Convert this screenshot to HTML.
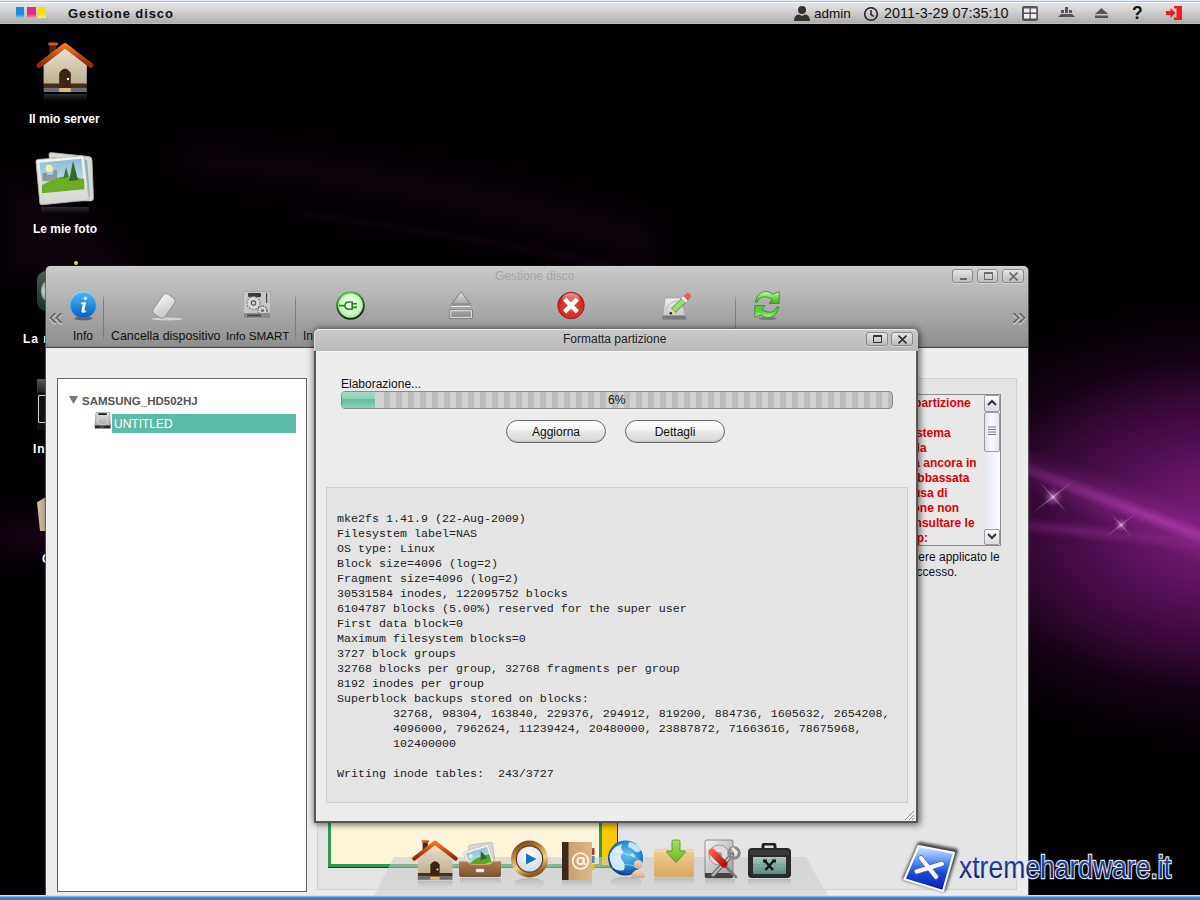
<!DOCTYPE html>
<html><head><meta charset="utf-8">
<style>
*{box-sizing:border-box;margin:0;padding:0}
html,body{width:1200px;height:900px;overflow:hidden;background:#000;font-family:"Liberation Sans",sans-serif}
.a{position:absolute}
.t{white-space:pre;position:absolute;line-height:1}
#desk{left:0;top:0;width:1200px;height:900px;background:#020002;overflow:hidden}
#topbar{left:0;top:0;width:1200px;height:24px;background:linear-gradient(#e2ecf8 0,#e2ecf8 1px,#b8bdc8 1px,#b8bdc8 2px,#f6f8fa 2px,#f6f8fa 3px,#e2e2e2 3px,#d8d8d8 9px,#b6b6b6 20px,#aeaeae 22.5px,#bcbcbc 23px,#bcbcbc 24px)}
.lbl{color:#fff;font-weight:bold;font-size:12px}
.tb{font-size:12px;color:#111}
.sep{width:1px;background:linear-gradient(rgba(120,120,120,0),#808080 15%,#7a7a7a 85%,rgba(120,120,120,0.2))}
.wb{background:linear-gradient(#e6e6e6,#bdbdbd);border:1px solid #8a8a8a;border-radius:3px;box-shadow:0 1px 0 rgba(255,255,255,.35)}
.log{font-family:"Liberation Mono",monospace;font-size:11.67px;line-height:15px;color:#222;white-space:pre}
.red{color:#e00000;font-weight:bold;font-size:12px}
.btn{border:1px solid #666;border-radius:12px;background:linear-gradient(#fdfdfd,#f4f4f4 40%,#e2e2e2 60%,#d8d8d8);box-shadow:inset 0 -1px 1px rgba(0,0,0,.12),inset 0 1px 0 #fff;font-size:12px;color:#111;text-align:center;line-height:22.5px}
</style></head><body>
<div id="desk" class="a">
  <!-- purple glow right -->
  <div class="a" style="left:860px;top:220px;width:440px;height:580px;background:radial-gradient(ellipse 360px 225px at 370px 305px,rgba(128,30,128,1) 0%,rgba(110,22,110,.9) 25%,rgba(84,14,84,.75) 50%,rgba(44,5,44,.42) 75%,rgba(0,0,0,0) 100%)"></div>
  <div class="a" style="left:940px;top:460px;width:360px;height:90px;background:radial-gradient(ellipse 250px 26px at 220px 45px,rgba(170,50,170,.35),rgba(0,0,0,0));transform:rotate(21deg)"></div>
  <div class="a" style="left:940px;top:460px;width:360px;height:90px;background:radial-gradient(ellipse 230px 9px at 220px 45px,rgba(210,80,210,.42),rgba(0,0,0,0));transform:rotate(21deg)"></div>
  <div class="a" style="left:940px;top:502px;width:300px;height:60px;background:radial-gradient(ellipse 190px 9px at 150px 30px,rgba(160,50,160,.35),rgba(0,0,0,0));transform:rotate(6deg)"></div>
  <svg class="a" style="left:1013px;top:457px" width="80" height="80" viewBox="0 0 80 80"><defs><radialGradient id="spk"><stop offset="0" stop-color="#f8d0f8" stop-opacity=".8"/><stop offset=".3" stop-color="#e090e0" stop-opacity=".4"/><stop offset="1" stop-color="#c060c0" stop-opacity="0"/></radialGradient><linearGradient id="spl" x1="0" y1="0" x2="1" y2="0"><stop offset="0" stop-color="#e0a0e0" stop-opacity="0"/><stop offset=".5" stop-color="#f0c0f0" stop-opacity=".6"/><stop offset="1" stop-color="#e0a0e0" stop-opacity="0"/></linearGradient></defs>
    <circle cx="40" cy="40" r="10" fill="url(#spk)"/>
    <rect x="14" y="39.4" width="52" height="1.2" fill="url(#spl)" transform="rotate(-38 40 40)"/>
    <rect x="18" y="39.4" width="44" height="1.2" fill="url(#spl)" transform="rotate(48 40 40)"/>
  </svg>
  <svg class="a" style="left:1096px;top:500px" width="50" height="50" viewBox="0 0 50 50">
    <circle cx="25" cy="25" r="7" fill="url(#spk)"/>
    <rect x="6" y="24.5" width="38" height="1" fill="url(#spl)" transform="rotate(-38 25 25)"/>
    <rect x="9" y="24.5" width="32" height="1" fill="url(#spl)" transform="rotate(48 25 25)"/>
  </svg>
  <!-- faint left streak -->
  <svg class="a" style="left:0;top:80px" width="800" height="200" viewBox="0 0 800 200"><defs><filter id="fb" x="-30%" y="-80%" width="160%" height="260%"><feGaussianBlur stdDeviation="12"/></filter><filter id="fb2" x="-20%" y="-80%" width="140%" height="260%"><feGaussianBlur stdDeviation="3"/></filter></defs>
  <g opacity=".04"><path d="M180 95 Q380 115 660 190 L660 140 Q420 70 180 60 Z" fill="#ff40f0" filter="url(#fb)"/>
  <path d="M0 90 Q90 130 150 200 L0 200 Z" fill="#ff40f0" filter="url(#fb)"/></g>
  <g opacity=".11"><path d="M300 134 Q450 152 610 186" fill="none" stroke="#ff40f0" stroke-width="3" filter="url(#fb2)"/></g>
</svg>
  <div class="a" style="left:-60px;top:475px;width:200px;height:120px;background:radial-gradient(ellipse 100px 38px at 100px 60px,rgba(35,4,32,.6),rgba(0,0,0,0))"></div>
</div>

<!-- desktop icons -->
<svg class="a" style="left:30px;top:36px" width="70" height="70" viewBox="0 0 70 70">
  <defs>
    <linearGradient id="hroof" x1="0" y1="0" x2="0" y2="1"><stop offset="0" stop-color="#f07828"/><stop offset=".5" stop-color="#c84a14"/><stop offset="1" stop-color="#8a2a0a"/></linearGradient>
    <linearGradient id="hwall" x1="0" y1="0" x2="0" y2="1"><stop offset="0" stop-color="#ece2cc"/><stop offset="1" stop-color="#bcae92"/></linearGradient>
    <linearGradient id="hrefl" x1="0" y1="0" x2="0" y2="1"><stop offset="0" stop-color="#3a3a3a" stop-opacity=".8"/><stop offset="1" stop-color="#222" stop-opacity="0"/></linearGradient>
  </defs>
  <rect x="19.5" y="9" width="6.5" height="12" fill="#4a2a1a"/>
  <rect x="18.3" y="6.5" width="9.5" height="3" rx="1" fill="#d85a1a"/>
  <path d="M13.6 29 L35 12 L56.8 29 L56.8 48.2 L13.6 48.2 Z" fill="url(#hwall)"/>
  <rect x="13.6" y="47.5" width="43.2" height="4.5" fill="#4a2e1c"/>
  <rect x="13.6" y="52" width="43.2" height="4" fill="#6a6e78"/>
  <path d="M29.2 52 L29.2 37 Q35 28.5 40.8 37 L40.8 52 Z" fill="#3e2418"/>
  <circle cx="38" cy="43" r="1.2" fill="#eee"/>
  <rect x="29.2" y="52" width="11.6" height="4" fill="#d8bc80"/>
  <path d="M9 29.5 L35 9.5 L61 29.5" fill="none" stroke="url(#hroof)" stroke-width="5" stroke-linecap="round" stroke-linejoin="round"/>
  <rect x="13.6" y="58" width="43.2" height="8" fill="url(#hrefl)"/>
</svg>
<div class="t lbl" style="left:29px;top:113px">Il mio server</div>

<svg class="a" style="left:32px;top:148px" width="64" height="68" viewBox="0 0 64 68">
  <defs>
    <linearGradient id="psky" x1="0" y1="0" x2="0" y2="1"><stop offset="0" stop-color="#88bcd4"/><stop offset="1" stop-color="#dcecf0"/></linearGradient>
    <linearGradient id="pfr" x1="0" y1="0" x2="0" y2="1"><stop offset="0" stop-color="#f4f4f2"/><stop offset="1" stop-color="#d4d4d0"/></linearGradient>
    <linearGradient id="prefl" x1="0" y1="0" x2="0" y2="1"><stop offset="0" stop-color="#3a3a3a" stop-opacity=".8"/><stop offset="1" stop-color="#222" stop-opacity="0"/></linearGradient>
  </defs>
  <path d="M17 6.5 Q17 4.5 19 4.6 L57 8.5 Q60 9 60 12 L61.5 50 Q61.5 53 58.5 53 L22 52 Z" fill="#d8d8d4" stroke="#b0b0aa" stroke-width=".8"/>
  <path d="M20 9 L55 12 L58 48 L24 48 Z" fill="#8ab0c0"/>
  <path d="M4 13.5 Q3.8 11.6 6 11.4 L50 8 Q52 7.8 52.3 10 L56.8 50 Q57 52 55 52.2 L10 56.8 Q8 57 7.8 55 Z" fill="url(#pfr)" stroke="#b8b8b2" stroke-width=".8"/>
  <path d="M7.6 14.8 L49.2 10.8 L52.4 41.2 L10 45.2 Z" fill="url(#psky)"/>
  <circle cx="17.2" cy="20.4" r="3.6" fill="#f4eeb0"/>
  <path d="M10.5 33 L10.5 25 L15 24.5 L15 27 L21 26.5 L22 22 L25 22 L25.5 33 Z" fill="#8a98a0"/>
  <path d="M10 37 Q20 31 30 30 Q42 28 52 31 L52.4 41.2 L10 45.2 Z" fill="#6cac28"/>
  <path d="M24 31 Q30 27 36 30 Z" fill="#5a9a22"/>
  <path d="M41 13 L46 32 L37 33 Z" fill="#2f6a28"/>
  <path d="M34 19 L37 29 L31.5 30 Z" fill="#3a7a30"/>
  <rect x="9" y="59" width="48" height="7" fill="url(#prefl)"/>
</svg>
<div class="t lbl" style="left:33px;top:223px">Le mie foto</div>

<!-- partially hidden icons -->
<div class="a" style="left:37px;top:271px;width:30px;height:40px;border-radius:9px;background:linear-gradient(#4a5e4e,#2a4434 60%,#163024)"></div>
<div class="a" style="left:41px;top:280px;width:16px;height:22px;border-radius:50%;background:radial-gradient(circle at 40% 50%,#dde4e0,#8a9a90 70%,#3a4a40)"></div>
<div class="a" style="left:74px;top:261px;width:4px;height:4px;border-radius:2px;background:#d8d840"></div>
<div class="t lbl" style="left:23px;top:333px;letter-spacing:1px">La m</div>
<div class="a" style="left:37px;top:379px;width:12px;height:13px;background:linear-gradient(#555,#222)"></div>
<div class="a" style="left:37px;top:392px;width:12px;height:38px;background:#111"></div>
<div class="a" style="left:38px;top:395px;width:10px;height:28px;border:1.5px solid #d0d0d0;border-right:0;border-radius:2px 0 0 2px"></div>
<div class="t lbl" style="left:33px;top:443px;letter-spacing:1px">In</div>
<div class="a" style="left:37px;top:495px;width:12px;height:36px;background:linear-gradient(90deg,#d8c4aa,#a08a72);clip-path:polygon(0 20%,100% 0,100% 100%,25% 100%)"></div>
<div class="t lbl" style="left:42px;top:553px">C</div>

<div id="topbar" class="a">
  <div class="a" style="left:16px;top:7px;width:8px;height:11px;background:linear-gradient(#1a8fd6 65%,#8cc8ee)"></div>
  <div class="a" style="left:27px;top:7px;width:8.5px;height:11px;background:linear-gradient(#e0307a 65%,#f0a0c0)"></div>
  <div class="a" style="left:37.5px;top:7px;width:8.5px;height:11px;background:linear-gradient(#f6e000 65%,#f8f0a0)"></div>
  <div class="t" style="left:68px;top:6.5px;font-size:13px;font-weight:bold;letter-spacing:0.9px;color:#111">Gestione disco</div>
  <svg class="a" style="left:793px;top:5px" width="18" height="16" viewBox="0 0 18 16"><circle cx="9" cy="5" r="4" fill="#333"/><path d="M1 16 Q1 10 6 9.5 L9 11 L12 9.5 Q17 10 17 16 Z" fill="#333"/></svg>
  <div class="t" style="left:814px;top:7px;font-size:13.5px;color:#111">admin</div>
  <svg class="a" style="left:863px;top:6px" width="16" height="16" viewBox="0 0 16 16"><circle cx="8" cy="8" r="6.3" fill="none" stroke="#222" stroke-width="1.6"/><path d="M8 4 L8 8.5 L11 10.5" fill="none" stroke="#222" stroke-width="1.5"/></svg>
  <div class="t" style="left:884px;top:6px;font-size:14.4px;color:#111">2011-3-29 07:35:10</div>
  <svg class="a" style="left:1022px;top:6px" width="16" height="15" viewBox="0 0 16 15"><rect x="0" y="0" width="16" height="15" rx="2" fill="#555"/><rect x="2" y="2.5" width="5.5" height="4" fill="#eee"/><rect x="8.8" y="2.5" width="5.5" height="4" fill="#eee"/><rect x="2" y="8" width="5.5" height="4.5" fill="#eee"/><rect x="8.8" y="8" width="5.5" height="4.5" fill="#eee"/></svg>
  <svg class="a" style="left:1058px;top:7px" width="17" height="11" viewBox="0 0 17 11"><rect x="7" y="0" width="3" height="3" fill="#555"/><rect x="3" y="3" width="3" height="3" fill="#555"/><rect x="7" y="3" width="3" height="3" fill="#555"/><rect x="11" y="3" width="3" height="3" fill="#555"/><path d="M0 10 L3 7 L14 7 L17 10 Z" fill="#555"/></svg>
  <svg class="a" style="left:1095px;top:8px" width="13" height="10" viewBox="0 0 13 10"><path d="M6.5 0 L13 6 L0 6 Z" fill="#555"/><rect x="0" y="7.5" width="13" height="2.5" fill="#555"/></svg>
  <div class="t" style="left:1132px;top:5px;font-size:17.5px;font-weight:bold;color:#111">?</div>
  <svg class="a" style="left:1166px;top:6px" width="16" height="14" viewBox="0 0 16 14"><path d="M8 0 L16 0 L16 14 L8 14 L8 11.5 L13 11.5 L13 2.5 L8 2.5 Z" fill="#e82020"/><rect x="10.5" y="1" width="4.5" height="12" fill="#e82020"/><path d="M0 5 L4.5 5 L4.5 2 L9.5 7 L4.5 12 L4.5 9 L0 9 Z" fill="#e82020"/></svg>
</div>
<div class="a" style="left:0;top:24px;width:1200px;height:1px;background:#000"></div>

<!-- main window -->
<div id="win" class="a" style="left:46px;top:266px;width:982px;height:634px;background:#ececec;border-radius:5px 5px 0 0;box-shadow:-1px 0 1px rgba(90,90,90,.9),1px 0 1px rgba(90,90,90,.9)">
  <div class="a" style="left:0;top:0;width:982px;height:82px;background:linear-gradient(#cfcfcf 0,#c4c4c4 10%,#b2b2b2 40%,#9a9a9a 80%,#8e8e8e 98%,#4a4a4a 98.8%);border-radius:5px 5px 0 0"></div>
  <div class="t" style="left:449px;top:4px;font-size:12px;color:#a4a4a4">Gestione disco</div>
  <div class="a wb" style="left:906px;top:3px;width:21px;height:14px"><div class="a" style="left:7px;top:8px;width:7px;height:2px;background:#6a6a6a"></div></div>
  <div class="a wb" style="left:931px;top:3px;width:21px;height:14px"><div class="a" style="left:6px;top:2px;width:9px;height:8px;border:1px solid #6a6a6a;border-top-width:2px"></div></div>
  <div class="a wb" style="left:956px;top:3px;width:22px;height:14px"><svg class="a" style="left:6px;top:2px" width="9" height="9" viewBox="0 0 9 9"><path d="M0.5 0.5 L8.5 8.5 M8.5 0.5 L0.5 8.5" stroke="#6a6a6a" stroke-width="1.6"/></svg></div>
  <!-- toolbar -->
  <svg class="a" style="left:3px;top:47px" width="14" height="12" viewBox="0 0 14 12"><path d="M6.5 1 L1.5 6 L6.5 11 M12.5 1 L7.5 6 L12.5 11" fill="none" stroke="#f0f0f0" stroke-width="2"/><path d="M6.5 0 L1.5 5 L6.5 10 M12.5 0 L7.5 5 L12.5 10" fill="none" stroke="#666" stroke-width="1.9"/></svg>
  <svg class="a" style="left:966px;top:47px" width="14" height="12" viewBox="0 0 14 12"><path d="M1.5 1 L6.5 6 L1.5 11 M7.5 1 L12.5 6 L7.5 11" fill="none" stroke="#f0f0f0" stroke-width="2"/><path d="M1.5 0 L6.5 5 L1.5 10 M7.5 0 L12.5 5 L7.5 10" fill="none" stroke="#666" stroke-width="1.9"/></svg>

  <!-- info icon -->
  <svg class="a" style="left:22px;top:24px" width="32" height="32" viewBox="0 0 32 32">
    <defs><linearGradient id="gi" x1="0" y1="0" x2="0" y2="1"><stop offset="0" stop-color="#58b4ee"/><stop offset=".5" stop-color="#2a8ee0"/><stop offset="1" stop-color="#0a5cc0"/></linearGradient>
    <linearGradient id="gi2" x1="0" y1="0" x2="0" y2="1"><stop offset="0" stop-color="#9ae4ff"/><stop offset="1" stop-color="#3aa0e8" stop-opacity=".3"/></linearGradient></defs>
    <ellipse cx="15.5" cy="28.5" rx="9" ry="1.8" fill="#333" opacity=".6"/>
    <circle cx="15.3" cy="14.9" r="13.1" fill="url(#gi)" stroke="url(#gi2)" stroke-width="1"/>
    <circle cx="17.3" cy="8.4" r="1.7" fill="#fff"/>
    <path d="M13.3 12.6 L18.2 12.2 L16.4 19.6 Q16.1 21 17.9 20.4 L17.5 22.2 Q12.8 23.8 13.6 20 L14.9 14.3 L13.1 14.3 Z" fill="#fff"/>
  </svg>
  <div class="t tb" style="left:27px;top:64px">Info</div>
  <div class="a sep" style="left:57px;top:28px;height:48px"></div>

  <!-- eraser -->
  <svg class="a" style="left:101px;top:24px" width="40" height="32" viewBox="0 0 40 32">
    <defs><linearGradient id="ge" x1="0" y1="0" x2="1" y2="1"><stop offset="0" stop-color="#f4f4f4"/><stop offset="1" stop-color="#c4c4c4"/></linearGradient></defs>
    <ellipse cx="20" cy="29" rx="16" ry="1.5" fill="#ddd" opacity=".8"/>
    <rect x="10" y="4" width="14" height="24" rx="4" transform="rotate(35 17 16)" fill="url(#ge)" stroke="#8a8a8a" stroke-width=".8"/>
  </svg>
  <div class="t tb" style="left:65px;top:64px;font-size:12.4px">Cancella dispositivo</div>

  <!-- smart hdd -->
  <svg class="a" style="left:197px;top:25px" width="28" height="28" viewBox="0 0 28 28">
    <rect x="0.5" y="0.5" width="27" height="27" rx="1.5" fill="#c6c6c6" stroke="#a8a8a8" stroke-width="1"/>
    <rect x="5" y="2" width="13" height="4" rx="1" fill="#3a3a3a"/>
    <circle cx="10.5" cy="12" r="6.5" fill="#d8d8d8" stroke="#7a7a7a" stroke-width="1.2" stroke-dasharray="2 1.2"/>
    <circle cx="10.5" cy="12" r="2.2" fill="none" stroke="#555" stroke-width="1.2"/>
    <circle cx="19.5" cy="19.5" r="4.5" fill="#d0d0d0" stroke="#6a6a6a" stroke-width="1.4" stroke-dasharray="1.6 1"/>
    <circle cx="19.5" cy="19.5" r="1.5" fill="#666"/>
    <rect x="23" y="2" width="1.2" height="10" fill="#444"/>
    <rect x="1" y="22" width="26" height="5" fill="#8a8a8a"/>
    <rect x="4" y="23.5" width="14" height="2" fill="#4a4a4a"/>
  </svg>
  <div class="t tb" style="left:180px;top:64px;font-size:11.7px">Info SMART</div>
  <div class="a sep" style="left:249px;top:28px;height:48px"></div>
  <div class="t tb" style="left:257px;top:64px">In</div>

  <!-- plug -->
  <svg class="a" style="left:290px;top:25px" width="30" height="30" viewBox="0 0 30 30">
    <defs><radialGradient id="gp" cx=".5" cy=".4" r=".6"><stop offset="0" stop-color="#f4fff4"/><stop offset=".7" stop-color="#d0f4c8"/><stop offset="1" stop-color="#90e080"/></radialGradient>
    <linearGradient id="gpr" x1="0" y1="0" x2=".3" y2="1"><stop offset="0" stop-color="#58d048"/><stop offset=".5" stop-color="#2a7a22"/><stop offset="1" stop-color="#0a2a0a"/></linearGradient></defs>
    <circle cx="14.5" cy="14.5" r="13.3" fill="url(#gp)" stroke="url(#gpr)" stroke-width="2"/>
    <circle cx="14.5" cy="14.5" r="11.6" fill="none" stroke="#a0e890" stroke-width=".8"/>
    <path d="M3 14.6 L9 14.6 M16.2 11 L13 11 Q9 11 9 14.6 Q9 18.3 13 18.3 L16.2 18.3 Z M16.2 12.8 L21 12.8 M16.2 16.4 L21 16.4" fill="none" stroke="#1e8a18" stroke-width="1.6"/>
  </svg>

  <!-- eject -->
  <svg class="a" style="left:403px;top:25px" width="26" height="30" viewBox="0 0 26 30">
    <defs><linearGradient id="gj" x1="0" y1="0" x2="0" y2="1"><stop offset="0" stop-color="#e4e4e4"/><stop offset="1" stop-color="#a4a4a4"/></linearGradient>
    <linearGradient id="gj2" x1="0" y1="0" x2="0" y2="1"><stop offset="0" stop-color="#a8a8a8"/><stop offset="1" stop-color="#8a8a8a"/></linearGradient></defs>
    <path d="M12 0.6 L21.4 13.1 L2.6 13.1 Z" fill="url(#gj)" stroke="#747474" stroke-width=".9" stroke-linejoin="round"/>
    <rect x="1.2" y="14.6" width="21.3" height="2" fill="#f0f0f0" stroke="#858585" stroke-width=".7"/>
    <rect x="0.8" y="18.8" width="22.6" height="8.6" fill="url(#gj2)" stroke="#7a7a7a" stroke-width=".8"/>
    <rect x="1.8" y="19.8" width="20.6" height="6.6" fill="none" stroke="#e8e8e8" stroke-width=".9"/>
  </svg>

  <!-- red x -->
  <svg class="a" style="left:510px;top:25px" width="30" height="30" viewBox="0 0 30 30">
    <defs><radialGradient id="gx" cx=".5" cy=".55" r=".6"><stop offset="0" stop-color="#e85040"/><stop offset=".75" stop-color="#d02a20"/><stop offset="1" stop-color="#a01010"/></radialGradient>
    <linearGradient id="gx2" x1="0" y1="0" x2="0" y2="1"><stop offset="0" stop-color="#fff" stop-opacity=".5"/><stop offset="1" stop-color="#fff" stop-opacity="0"/></linearGradient></defs>
    <circle cx="15" cy="14.5" r="13.3" fill="url(#gx)" stroke="#9a1a14" stroke-width=".8"/>
    <ellipse cx="15" cy="8" rx="9" ry="6" fill="url(#gx2)"/>
    <path d="M10.2 9.7 L19.8 19.3 M19.8 9.7 L10.2 19.3" stroke="#fff" stroke-width="4.4" stroke-linecap="square"/>
  </svg>

  <!-- pencil hdd -->
  <svg class="a" style="left:614px;top:26px" width="32" height="30" viewBox="0 0 32 30">
    <defs><linearGradient id="ph1" x1="0" y1="0" x2="0" y2="1"><stop offset="0" stop-color="#f0f0f0"/><stop offset="1" stop-color="#c8c8c8"/></linearGradient>
    <linearGradient id="ph2" x1="0" y1="0" x2="1" y2="1"><stop offset="0" stop-color="#3a8a18"/><stop offset=".5" stop-color="#a8e080"/><stop offset="1" stop-color="#2a7010"/></linearGradient></defs>
    <path d="M5.2 6.1 L20 6 L25.7 23.7 L2.8 23.7 Z" fill="url(#ph1)" stroke="#999" stroke-width=".6"/>
    <path d="M6 18 Q8 10 18 8.5" fill="none" stroke="#aaa" stroke-width=".8"/>
    <rect x="2.8" y="23.7" width="22.9" height="4" fill="#7a7a7a"/>
    <rect x="2.8" y="27" width="22.9" height="1" fill="#888"/>
    <path d="M10.1 21.9 L11.5 16.3 L15.7 20.5 Z" fill="#f0d8a0"/>
    <circle cx="10.8" cy="21.2" r="1.3" fill="#222"/>
    <path d="M11.5 16.3 L21.4 6.4 L25.6 10.6 L15.7 20.5 Z" fill="url(#ph2)" stroke="#2a6a10" stroke-width=".5"/>
    <path d="M21.4 6.4 L23.6 4.2 L27.8 8.4 L25.6 10.6 Z" fill="#f4f4f4"/>
    <path d="M23.6 4.2 L26.4 1.4 Q28 0 29.5 1.5 L30.6 2.6 Q32 4 30.6 5.6 L27.8 8.4 Z" fill="#e06060"/>
  </svg>
  <div class="a sep" style="left:689px;top:28px;height:54px"></div>

  <!-- refresh -->
  <svg class="a" style="left:706px;top:24px" width="30" height="32" viewBox="0 0 30 32">
    <defs><linearGradient id="gr" x1="0" y1="0" x2="0" y2="1"><stop offset="0" stop-color="#c8f8a8"/><stop offset=".45" stop-color="#7ee05a"/><stop offset="1" stop-color="#38b020"/></linearGradient>
    <linearGradient id="gr2" x1="0" y1="0" x2="0" y2="1"><stop offset="0" stop-color="#b8f098"/><stop offset=".5" stop-color="#60d040"/><stop offset="1" stop-color="#58d040"/></linearGradient></defs>
    <ellipse cx="15.5" cy="28.5" rx="9" ry="1.6" fill="#333" opacity=".35"/>
    <path d="M3.2 11.8 Q5.5 2.5 13 1.5 Q17.5 1 20.8 4.2 L27.2 1.7 L27.2 13.4 L17.2 13.4 L20.2 9.6 Q16 6.2 11.5 6.8 Q7 7.5 5 12.4 Z" fill="url(#gr)" stroke="#2a8a1a" stroke-width=".8" stroke-linejoin="round"/>
    <path d="M3.2 11.8 Q5.5 2.5 13 1.5 Q17.5 1 20.8 4.2 L27.2 1.7 L27.2 13.4 L17.2 13.4 L20.2 9.6 Q16 6.2 11.5 6.8 Q7 7.5 5 12.4 Z" transform="rotate(180 15 14.5)" fill="url(#gr2)" stroke="#2a8a1a" stroke-width=".8" stroke-linejoin="round"/>
  </svg>

  <!-- content area -->
  <div class="a" style="left:11px;top:112px;width:250px;height:514px;background:#fff;border:1px solid #666"></div>
  <svg class="a" style="left:23px;top:129.5px" width="9" height="8" viewBox="0 0 9 8"><path d="M0 0 L9 0 L4.5 8 Z" fill="#777"/></svg>
  <div class="t" style="left:36px;top:130px;font-size:11.5px;font-weight:bold;color:#555">SAMSUNG_HD502HJ</div>
  <svg class="a" style="left:48px;top:146px" width="17" height="17" viewBox="0 0 17 17"><defs><linearGradient id="gd" x1="0" y1="0" x2="0" y2="1"><stop offset="0" stop-color="#e4e4e6"/><stop offset="1" stop-color="#a4a4a8"/></linearGradient></defs><path d="M2 0.5 L15.5 0.5 L16.5 14 L0.8 14 Z" fill="url(#gd)" stroke="#8a8a8e" stroke-width=".6"/><rect x="4" y="1.3" width="9" height="1.6" rx=".8" fill="#1a1a1a"/><ellipse cx="8.6" cy="9" rx="5.5" ry="4" fill="none" stroke="#d8d8dc" stroke-width="1"/><rect x="0.8" y="13.5" width="15.8" height="3" fill="#2a2a2a"/><rect x="6" y="14.3" width="4" height="1.4" fill="#555"/></svg>
  <div class="a" style="left:66px;top:148px;width:184px;height:19px;background:#5bbcaa"></div>
  <div class="t" style="left:68px;top:152px;font-size:12px;color:#fff">UNTITLED</div>

  <!-- right panel -->
  <div class="a" style="left:271px;top:112px;width:700px;height:512px;background:#e4e4e4;border:1px solid #d2d2d2"></div>
  <!-- green box -->
  <div class="a" style="left:282px;top:500px;width:289px;height:101px;background:#fdf4da;border:3px solid #2f9a4f;box-shadow:0 1px 0 #333"></div>
  <div class="a" style="left:553px;top:500px;width:19px;height:99px;background:#f8c800;border-left:3px solid #2a9a48;border-right:1px solid #333"></div>
  <!-- red text box -->
  <div class="a" style="left:560px;top:128px;width:395px;height:152px;background:#e8e8e8;border:1px solid #8c8c8c"></div>
  <div class="a" style="left:938px;top:129px;width:16px;height:150px;background:linear-gradient(90deg,#e8e8f0,#fafafe)"></div>
  <div class="a" style="left:938px;top:129px;width:16px;height:17px;background:linear-gradient(#fdfdfd,#d8dae2);border:1px solid #9a9aa8;border-radius:2px"></div>
  <svg class="a" style="left:941px;top:133px" width="10" height="7" viewBox="0 0 10 7"><path d="M1 6 L5 2 L9 6" fill="none" stroke="#333" stroke-width="2"/></svg>
  <div class="a" style="left:938px;top:146px;width:16px;height:40px;background:linear-gradient(90deg,#dfe0e8,#fbfbff 40%,#e6e7ef);border:1px solid #9a9aa8;border-radius:2px"></div>
  <svg class="a" style="left:942px;top:160px" width="8" height="10" viewBox="0 0 8 10"><path d="M0 1H8M0 3.5H8M0 6H8M0 8.5H8" stroke="#777" stroke-width="1"/></svg>
  <div class="a" style="left:938px;top:263px;width:16px;height:16px;background:linear-gradient(#fdfdfd,#d8dae2);border:1px solid #9a9aa8;border-radius:2px"></div>
  <svg class="a" style="left:941px;top:267px" width="10" height="7" viewBox="0 0 10 7"><path d="M1 1 L5 5 L9 1" fill="none" stroke="#333" stroke-width="2"/></svg>
  <div class="t red" style="left:0;width:924.8px;text-align:right;top:130px;line-height:15px">Dispositivo partizione</div>
  <div class="t red" style="left:0;width:904.6px;text-align:right;top:160px;line-height:15px">sistema</div>
  <div class="t red" style="left:0;width:880.6px;text-align:right;top:175px;line-height:15px">della</div>
  <div class="t red" style="left:0;width:930.6px;text-align:right;top:190px;line-height:15px">La ancora in</div>
  <div class="t red" style="left:0;width:923.4px;text-align:right;top:205px;line-height:15px">abbassata</div>
  <div class="t red" style="left:0;width:901.7px;text-align:right;top:220px;line-height:15px">causa di</div>
  <div class="t red" style="left:0;width:913.2px;text-align:right;top:235px;line-height:15px">zione non</div>
  <div class="t red" style="left:0;width:928.6px;text-align:right;top:250px;line-height:15px">consultare le</div>
  <div class="t red" style="left:0;width:882.0px;text-align:right;top:265px;line-height:15px">help:</div>
  <div class="t" style="left:0;width:953.7px;text-align:right;top:284px;font-size:12px;line-height:15px;color:#111">potrebbe essere applicato le</div>
  <div class="t" style="left:0;width:911.2px;text-align:right;top:299px;font-size:12px;line-height:15px;color:#111">accesso.</div>
</div>

<!-- bottom blue bar -->
<div class="a" style="left:0;top:895px;width:1200px;height:5px;background:linear-gradient(#d4e2f2 0,#d4e2f2 1px,#8ab0dc 1px,#8ab0dc 2px,#4f88c8 2px,#3f78ba)"></div>

<!-- dock -->
<svg class="a" style="left:360px;top:850px" width="480" height="46" viewBox="0 0 480 46">
  <defs><linearGradient id="gsh" x1="0" y1="0" x2="0" y2="1"><stop offset="0" stop-color="#c8c8c8" stop-opacity=".55"/><stop offset="1" stop-color="#d0d0d0" stop-opacity=".6"/></linearGradient></defs>
  <path d="M34 7 L446 7 L468 46 L14 46 Z" fill="url(#gsh)"/>
</svg>
<!-- dock icons -->
<svg width="0" height="0" style="position:absolute"><defs><linearGradient id="refl" x1="0" y1="0" x2="0" y2="1"><stop offset="0" stop-color="#808080" stop-opacity=".35"/><stop offset="1" stop-color="#909090" stop-opacity="0"/></linearGradient></defs></svg>
<svg class="a" style="left:407px;top:834.5px" width="56" height="62" viewBox="0 0 70 77.5">
  <rect x="19.5" y="9" width="6.5" height="12" fill="#4a2a1a"/>
  <rect x="18.3" y="6.5" width="9.5" height="3" rx="1" fill="#d85a1a"/>
  <path d="M13.6 29 L35 12 L56.8 29 L56.8 48.2 L13.6 48.2 Z" fill="url(#hwall)"/>
  <rect x="13.6" y="47.5" width="43.2" height="4.5" fill="#4a2e1c"/>
  <rect x="13.6" y="52" width="43.2" height="4" fill="#6a6e78"/>
  <path d="M29.2 52 L29.2 37 Q35 28.5 40.8 37 L40.8 52 Z" fill="#3e2418"/>
  <circle cx="38" cy="43" r="1.2" fill="#eee"/>
  <rect x="29.2" y="52" width="11.6" height="4" fill="#d8bc80"/>
  <path d="M9 29.5 L35 9.5 L61 29.5" fill="none" stroke="url(#hroof)" stroke-width="5" stroke-linecap="round" stroke-linejoin="round"/>
  <rect x="13.6" y="57" width="43.2" height="9" fill="url(#refl)"/>
</svg>
<svg class="a" style="left:459px;top:842px" width="46" height="54" viewBox="0 0 46 54">
  <defs>
    <linearGradient id="dd1" x1="0" y1="0" x2="0" y2="1"><stop offset="0" stop-color="#b08050"/><stop offset="1" stop-color="#7a5030"/></linearGradient>
    <linearGradient id="dd2" x1="0" y1="0" x2="0" y2="1"><stop offset="0" stop-color="#8cc4e0"/><stop offset="1" stop-color="#d0e8f0"/></linearGradient>
  </defs>
  <g transform="rotate(-18 22 16)">
    <rect x="12" y="2" width="24" height="20" rx="1.5" fill="#d8d8d4" stroke="#aaa" stroke-width=".6" transform="rotate(10 24 12)"/>
    <rect x="7" y="5" width="26" height="21" rx="1.5" fill="#f2f2ee" stroke="#bbb" stroke-width=".6"/>
    <rect x="9" y="7" width="22" height="16" fill="url(#dd2)"/>
    <circle cx="13" cy="11" r="2" fill="#f0eeb0"/>
    <path d="M9 18 Q18 13 31 15 L31 23 L9 23 Z" fill="#5aa828"/>
    <path d="M24 9 L28 18 L21 18 Z" fill="#2f6a28"/>
  </g>
  <path d="M1 19 L8 19 Q10 22 14 22 L28 22 Q32 22 34 19 L41 19 Q42 19 42 20 L42 33 Q42 35 40 35 L2 35 Q0 35 0 33 L0 20 Q0 19 1 19 Z" fill="url(#dd1)"/>
  <path d="M1 19.5 L8 19.5 Q10 22.5 14 22.5 L28 22.5 Q32 22.5 34 19.5 L41 19.5" fill="none" stroke="#d0a878" stroke-width="1"/>
  <rect x="16.5" y="26.5" width="9" height="4" rx="1.5" fill="#f4f0e8" stroke="#7a5a3a" stroke-width=".6"/>
  <rect x="1" y="36" width="41" height="7" fill="url(#refl)"/>
</svg>
<svg class="a" style="left:509px;top:838px" width="42" height="58" viewBox="0 0 42 58">
  <defs>
    <linearGradient id="dp1" x1="0" y1="0" x2=".4" y2="1"><stop offset="0" stop-color="#4a2a0a"/><stop offset=".35" stop-color="#b07830"/><stop offset=".7" stop-color="#f0d090"/><stop offset="1" stop-color="#8a5a20"/></linearGradient>
    <radialGradient id="dp2" cx=".5" cy=".35" r=".6"><stop offset="0" stop-color="#ffffff"/><stop offset="1" stop-color="#d4dce4"/></radialGradient>
  </defs>
  <circle cx="20.5" cy="21" r="18.5" fill="url(#dp1)"/>
  <circle cx="20.5" cy="21" r="13.8" fill="#5a3a14"/>
  <circle cx="20.5" cy="21" r="12.6" fill="url(#dp2)"/>
  <path d="M17 15.5 L27.5 21 L17 26.5 Z" fill="#1a70c0"/>
  <ellipse cx="20.5" cy="45" rx="15" ry="5" fill="url(#refl)"/>
</svg>
<svg class="a" style="left:560px;top:840px" width="40" height="56" viewBox="0 0 40 56">
  <defs><linearGradient id="da1" x1="0" y1="0" x2="1" y2="0"><stop offset="0" stop-color="#c49a68"/><stop offset="1" stop-color="#dcb888"/></linearGradient></defs>
  <rect x="2" y="2" width="30" height="38" rx="1" fill="url(#da1)"/>
  <rect x="2" y="2" width="6.5" height="38" fill="#3a2a1a"/>
  <rect x="32" y="8" width="2.5" height="7" rx="1" fill="#c82828"/>
  <rect x="32" y="16" width="2.5" height="7" fill="#4a88c8"/>
  <rect x="32" y="24" width="2.5" height="6" fill="#e8c020"/>
  <circle cx="20.5" cy="21" r="7.8" fill="none" stroke="#fff4e0" stroke-width="1.8"/>
  <circle cx="20.5" cy="21" r="3.2" fill="none" stroke="#fff4e0" stroke-width="1.8"/>
  <path d="M23.7 17.5 L23.7 22.5 Q23.7 24.5 26 24" fill="none" stroke="#fff4e0" stroke-width="1.8"/>
  <rect x="2" y="40" width="30" height="7" fill="url(#refl)"/>
</svg>
<svg class="a" style="left:606px;top:838px" width="44" height="58" viewBox="0 0 44 58">
  <defs>
    <radialGradient id="dg1" cx=".55" cy=".4" r=".65"><stop offset="0" stop-color="#6cc8f0"/><stop offset=".55" stop-color="#2a8ad0"/><stop offset="1" stop-color="#0a2a78"/></radialGradient>
    <linearGradient id="dg2" x1="0" y1="0" x2="0" y2="1"><stop offset="0" stop-color="#f4dcc4"/><stop offset="1" stop-color="#d0a888"/></linearGradient>
  </defs>
  <circle cx="19.5" cy="20" r="17.5" fill="url(#dg1)"/>
  <path d="M4 16 Q8 8 16 6 Q14 12 18 14 Q13 17 16 22 Q20 26 18 32 Q10 34 6 28 Q3 22 4 16 Z" fill="#e8f6ff" opacity=".9"/>
  <path d="M23 4 Q31 5 35 11 Q34 15 30 14 Q26 10 22 9 Z" fill="#e8f6ff" opacity=".8"/>
  <path d="M26 15 Q30 17 29 20 Q26 19 24 17 Z" fill="#e8f6ff" opacity=".7"/>
  <path d="M3 19 Q19 10 36 24 M6 30 Q20 22 34 31" fill="none" stroke="#a8e8ff" stroke-width=".8" opacity=".8"/>
  <circle cx="32" cy="26.5" r="4.3" fill="url(#dg2)"/>
  <path d="M25 39.5 Q25 35 28.5 33 Q29.5 31.5 32 31.5 Q34.5 31.5 35.5 33 Q39 35 39 39.5 Q32 41 25 39.5 Z" fill="url(#dg2)"/>
  <ellipse cx="20" cy="44" rx="16" ry="5" fill="url(#refl)"/>
</svg>
<svg class="a" style="left:652px;top:838px" width="44" height="58" viewBox="0 0 44 58">
  <defs>
    <linearGradient id="df1" x1="0" y1="0" x2="0" y2="1"><stop offset="0" stop-color="#f0d098"/><stop offset="1" stop-color="#d8a860"/></linearGradient>
    <linearGradient id="df2" x1="0" y1="0" x2="0" y2="1"><stop offset="0" stop-color="#a8e060"/><stop offset="1" stop-color="#6ab828"/></linearGradient>
  </defs>
  <path d="M2 14 Q2 11 5 11 L12 11 Q14 9 16 11 L39 11 Q42 11 42 14 L42 37 Q42 39.5 39.5 39.5 L4.5 39.5 Q2 39.5 2 37 Z" fill="url(#df1)"/>
  <path d="M3 13 L41 13" stroke="#fff" stroke-width=".8" opacity=".6"/>
  <path d="M20 3.5 Q20 2 21.5 2 L26.5 2 Q28 2 28 3.5 L28 13 L32.5 13 Q34 13 33 14.5 L25 23.5 Q24 24.5 23 23.5 L15 14.5 Q14 13 15.5 13 L20 13 Z" fill="url(#df2)" stroke="#4a8a18" stroke-width=".8"/>
  <rect x="2" y="40" width="40" height="7" fill="url(#refl)"/>
</svg>
<svg class="a" style="left:703px;top:838px" width="40" height="58" viewBox="0 0 40 58">
  <defs><linearGradient id="dt1" x1="0" y1="0" x2="1" y2="1"><stop offset="0" stop-color="#f4f4f4"/><stop offset="1" stop-color="#9a9a9a"/></linearGradient>
  <linearGradient id="dt2" x1="0" y1="0" x2="1" y2="1"><stop offset="0" stop-color="#ff5a4a"/><stop offset="1" stop-color="#b01010"/></linearGradient></defs>
  <rect x="2" y="2" width="28" height="38" rx="2" fill="url(#dt1)" stroke="#777" stroke-width=".8"/>
  <circle cx="16" cy="17" r="10" fill="#dcdcdc" stroke="#999" stroke-width="1"/>
  <circle cx="16" cy="17" r="3" fill="#999"/>
  <rect x="2" y="35" width="28" height="5" fill="#444"/>
  <path d="M10 37 L29 17" stroke="#6a6a6a" stroke-width="4.5" stroke-linecap="round"/>
  <path d="M10 37 L29 17" stroke="#b8b8b8" stroke-width="2" stroke-linecap="round"/>
  <circle cx="31" cy="15" r="5.2" fill="none" stroke="#8a8a8a" stroke-width="3.2"/>
  <path d="M29 10 L34 15" stroke="#e8e8e8" stroke-width="3"/>
  <path d="M21 27 L33 39" stroke="#777" stroke-width="2.5" stroke-linecap="round"/>
  <path d="M9 14 L21 26" stroke="url(#dt2)" stroke-width="7" stroke-linecap="round"/>
  <rect x="2" y="41" width="30" height="7" fill="url(#refl)"/>
</svg>
<svg class="a" style="left:746px;top:843px" width="48" height="53" viewBox="0 0 48 53">
  <defs><linearGradient id="db1" x1="0" y1="0" x2="0" y2="1"><stop offset="0" stop-color="#a8c8c0"/><stop offset="1" stop-color="#5a8a80"/></linearGradient></defs>
  <rect x="17" y="1" width="12" height="6" rx="2" fill="none" stroke="#222" stroke-width="3"/>
  <rect x="2" y="5" width="43" height="30" rx="4" fill="#2a2a2a"/>
  <rect x="4" y="7" width="39" height="5" fill="#3a3a3a"/>
  <rect x="7" y="14" width="33" height="17" fill="url(#db1)"/>
  <path d="M7 21.5 H40 M18 14 V31 M29 14 V31" stroke="#7a9a94" stroke-width=".6"/><path d="M19 18 L27 27 M27.5 18 L19.5 27" stroke="#1a1a1a" stroke-width="2.6"/><rect x="17" y="16.5" width="4" height="3" fill="#1a1a1a"/><rect x="26" y="16.5" width="4" height="3" fill="#1a1a1a"/>
  <rect x="2" y="36" width="43" height="7" fill="url(#refl)"/>
</svg>

<!-- logo -->
<svg class="a" style="left:900px;top:838px" width="280" height="58" viewBox="0 0 280 58">
  <defs>
    <linearGradient id="lg1" x1="0" y1="0" x2="0" y2="1"><stop offset="0" stop-color="#d8ecff"/><stop offset=".35" stop-color="#5a8ef0"/><stop offset=".6" stop-color="#1a4ad8"/><stop offset="1" stop-color="#0a18a8"/></linearGradient><filter id="lgb" x="-30%" y="-30%" width="160%" height="160%"><feGaussianBlur stdDeviation="1.5"/></filter>
    <linearGradient id="lg2" x1="0" y1="0" x2="0" y2="1"><stop offset="0" stop-color="#3a5aa8"/><stop offset="1" stop-color="#0a1a58"/></linearGradient>
  </defs>
  <g filter="url(#lgb)" opacity=".7"><path d="M19.6 6 L56 12.8 L44 51.5 L4.5 40.3 Z" fill="#000" stroke="#000" stroke-width="4" stroke-linejoin="round"/></g>
  <path d="M18.6 8 L54 14.8 L43 53 L4.5 41.3 Z" fill="url(#lg1)" stroke="#f4f8ff" stroke-width="2.2" stroke-linejoin="round"/>
  <path d="M21 20 L36 38.7 M16.7 33.5 L41.9 25.8" stroke="#5a6aa0" stroke-width="5.6" stroke-linecap="round"/>
  <path d="M21 20 L36 38.7 M16.7 33.5 L41.9 25.8" stroke="#fafcff" stroke-width="4.2" stroke-linecap="round"/>
  <text x="59" y="40" font-family="Liberation Sans" font-size="32" fill="url(#lg2)" stroke="#dfe6f8" stroke-width="2.4" paint-order="stroke" textLength="212" lengthAdjust="spacingAndGlyphs">xtremehardware.it</text>
</svg>
<!-- dialog -->
<div id="dlg" class="a" style="left:314px;top:329px;width:604px;height:494px;background:#ececec;border:2px solid #555;border-top:0;border-radius:5px 5px 0 0;box-shadow:0 0 6px 1px rgba(0,0,0,.4),3px 2px 6px rgba(0,0,0,.25)">
  <div class="a" style="left:0;top:22px;width:600px;height:1px;background:#f6f6f6"></div><div class="a" style="left:0;top:22px;width:1px;height:470px;background:#f2f2f2"></div>
  <div class="a" style="left:-2px;top:0;width:604px;height:22px;background:linear-gradient(#c9c9c9,#c4c4c4 40%,#b9b9b9);border-radius:5px 5px 0 0;border-top:1px solid #ececec;box-shadow:inset 1px 0 0 #dcdcdc"></div>
  <div class="t" style="left:247px;top:4px;font-size:12px;color:#222">Formatta partizione</div>
  <div class="a wb" style="left:550px;top:3px;width:22px;height:14px"><div class="a" style="left:6px;top:2px;width:9px;height:8px;border:1px solid #333;border-top-width:2px"></div></div>
  <div class="a wb" style="left:575px;top:3px;width:22px;height:14px"><svg class="a" style="left:6px;top:2px" width="9" height="9" viewBox="0 0 9 9"><path d="M0.5 0.5 L8.5 8.5 M8.5 0.5 L0.5 8.5" stroke="#333" stroke-width="1.6"/></svg></div>

  <div class="t" style="left:25px;top:49px;font-size:12px;color:#111">Elaborazione...</div>
  <div class="a" style="left:25px;top:62px;width:552px;height:18px;border:1px solid #8a8a8a;border-radius:4px;background:repeating-linear-gradient(90deg,#d2d2d2 0 6px,#bebebe 6px 12px);overflow:hidden">
    <div class="a" style="left:33px;top:0;width:3px;height:16px;background:#d2d2d2"></div>
    <div class="a" style="left:0;top:0;width:33px;height:16px;background:linear-gradient(#a6dac8,#92d2bc 40%,#6cba9e 48%,#6cbea2 60%,#88d4b8)"></div>
  </div>
  <div class="t" style="left:292px;top:65px;font-size:12px;color:#111">6%</div>
  <div class="a btn" style="left:190px;top:91px;width:100px;height:23px">Aggiorna</div>
  <div class="a btn" style="left:309px;top:91px;width:100px;height:23px">Dettagli</div>

  <div class="a" style="left:10px;top:158px;width:582px;height:316px;background:#e4e4e4;border:1px solid #d0d0d0"></div>
  <div class="a log" style="left:21px;top:183px">mke2fs 1.41.9 (22-Aug-2009)
Filesystem label=NAS
OS type: Linux
Block size=4096 (log=2)
Fragment size=4096 (log=2)
30531584 inodes, 122095752 blocks
6104787 blocks (5.00%) reserved for the super user
First data block=0
Maximum filesystem blocks=0
3727 block groups
32768 blocks per group, 32768 fragments per group
8192 inodes per group
Superblock backups stored on blocks:
        32768, 98304, 163840, 229376, 294912, 819200, 884736, 1605632, 2654208,
        4096000, 7962624, 11239424, 20480000, 23887872, 71663616, 78675968,
        102400000

Writing inode tables:  243/3727</div>
  <svg class="a" style="left:587px;top:480px" width="12" height="12" viewBox="0 0 12 12"><path d="M11 2 L2 11 M11 6 L6 11 M11 9 L9 11" stroke="#888" stroke-width="1"/><path d="M11.5 2.5 L2.5 11.5 M11.5 6.5 L6.5 11.5" stroke="#fff" stroke-width=".8"/></svg>
</div>

</body></html>
